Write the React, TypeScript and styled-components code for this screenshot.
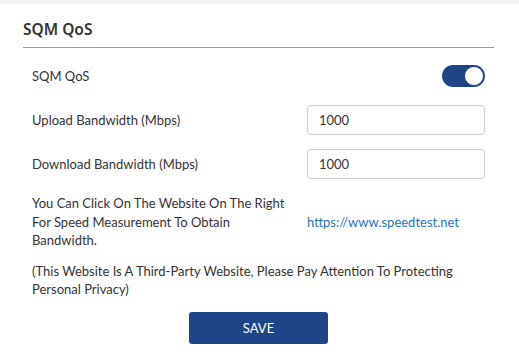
import React, { useState } from "react";
import styled, { createGlobalStyle } from "styled-components";

const GlobalStyle = createGlobalStyle`
  html, body {
    margin: 0;
    padding: 0;
    background: #ffffff;
  }
  body {
    font-family: Lato, "Noto Sans", Arial, sans-serif;
    color: #333333;
  }
`;

export const TopStrip = styled.div`
  height: 4px;
  background: #f2f2f2;
`;

export const Panel = styled.div`
  padding: 14px 25px 0 23px;
`;

export const Heading = styled.h2`
  font-family: "Noto Sans", Arial, sans-serif;
  font-size: 15.5px;
  line-height: 22px;
  font-weight: 600;
  color: #333333;
  margin: 0;
  padding-bottom: 7px;
  border-bottom: 1px solid #999999;
`;

export const Form = styled.div`
  padding: 17px 9px 0 9px;
`;

export const Row = styled.div<{ $height: number; $gap: number }>`
  display: grid;
  grid-template-columns: 275px 178px;
  align-items: center;
  height: ${(p) => p.$height}px;
  margin-top: ${(p) => p.$gap}px;
`;

export const Label = styled.span`
  font-size: 13px;
  line-height: 18px;
  color: #333333;
`;

export const Input = styled.input`
  box-sizing: border-box;
  width: 178px;
  height: 30px;
  border: 1px solid #cccccc;
  border-radius: 4px;
  padding: 0 11px;
  font-family: inherit;
  font-size: 13px;
  color: #333333;
  outline: none;
`;

export const SwitchCell = styled.div`
  display: flex;
  justify-content: flex-end;
`;

export const Switch = styled.button<{ $on: boolean }>`
  position: relative;
  width: 43px;
  height: 22px;
  border: none;
  border-radius: 11px;
  padding: 0;
  background: ${(p) => (p.$on ? "#1f4488" : "#cccccc")};
  cursor: pointer;
`;

export const Knob = styled.span<{ $on: boolean }>`
  position: absolute;
  top: 1px;
  left: ${(p) => (p.$on ? "22px" : "1px")};
  width: 20px;
  height: 20px;
  box-sizing: border-box;
  border-radius: 50%;
  background: #ffffff;
  border: 1px solid #1f4488;
`;

export const InfoRow = styled.div`
  display: grid;
  grid-template-columns: 275px 178px;
  align-items: center;
  margin-top: 15px;
`;

export const InfoText = styled.p`
  margin: 0;
  font-size: 13px;
  line-height: 18.5px;
  color: #333333;
  width: 262px;
`;

export const Link = styled.a`
  font-size: 13px;
  color: #2a73b8;
  text-decoration: none;
`;

export const Note = styled.p`
  margin: 12px 0 0 0;
  font-size: 13px;
  line-height: 18.5px;
  color: #333333;
`;

export const Actions = styled.div`
  display: flex;
  justify-content: center;
  padding: 13px 0 0 0;
  margin: 0 -9px;
`;

export const SaveButton = styled.button`
  width: 139px;
  height: 32px;
  border: none;
  border-radius: 3px;
  background: #1f4488;
  color: #ffffff;
  font-family: inherit;
  font-size: 13px;
  cursor: pointer;
`;

export default function App() {
  const [on, setOn] = useState(true);
  const [up, setUp] = useState("1000");
  const [down, setDown] = useState("1000");

  return (
    <>
      <GlobalStyle />
      <TopStrip />
      <Panel>
        <Heading>SQM QoS</Heading>
        <Form>
          <Row $height={22} $gap={0}>
            <Label>SQM QoS</Label>
            <SwitchCell>
              <Switch $on={on} onClick={() => setOn(!on)}>
                <Knob $on={on} />
              </Switch>
            </SwitchCell>
          </Row>
          <Row $height={30} $gap={18}>
            <Label>Upload Bandwidth (Mbps)</Label>
            <Input value={up} onChange={(e) => setUp(e.target.value)} />
          </Row>
          <Row $height={30} $gap={14}>
            <Label>Download Bandwidth (Mbps)</Label>
            <Input value={down} onChange={(e) => setDown(e.target.value)} />
          </Row>
          <InfoRow>
            <InfoText>
              You Can Click On The Website On The Right For Speed Measurement To Obtain Bandwidth.
            </InfoText>
            <Link href="#">https://www.speedtest.net</Link>
          </InfoRow>
          <Note>
            (This Website Is A Third-Party Website, Please Pay Attention To Protecting Personal Privacy)
          </Note>
          <Actions>
            <SaveButton>SAVE</SaveButton>
          </Actions>
        </Form>
      </Panel>
    </>
  );
}
